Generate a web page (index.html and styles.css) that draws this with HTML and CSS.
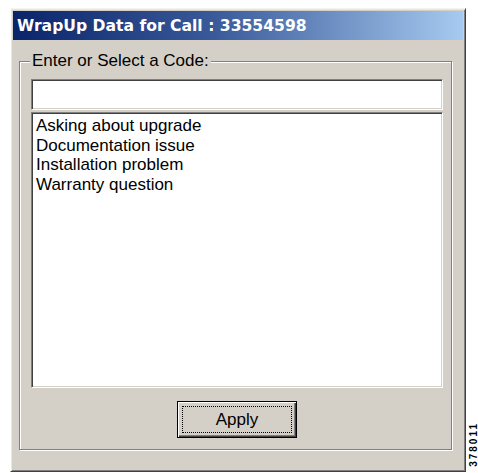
FILE: index.html
```html
<!DOCTYPE html>
<html lang="en">
<head>
<meta charset="utf-8">
<title>WrapUp Data</title>
<link rel="stylesheet" href="styles.css">
</head>
<body>
  <div class="window">
    <div class="titlebar">
      <span class="title">WrapUp Data for Call : 33554598</span>
    </div>
    <fieldset class="group">
      <legend class="group-label">Enter or Select a Code:</legend>
      <input class="code-input" type="text" aria-label="Wrap-up code">
      <ul class="code-list">
        <li>Asking about upgrade</li>
        <li>Documentation issue</li>
        <li>Installation problem</li>
        <li>Warranty question</li>
      </ul>
      <div class="actions">
        <button class="apply" type="button"><span class="focus-ring">Apply</span></button>
      </div>
    </fieldset>
  </div>
  <div class="fig-id">378011</div>
</body>
</html>
```

FILE: styles.css
```css
html, body {
  margin: 0;
  padding: 0;
  background: #ffffff;
}

body {
  position: relative;
  width: 478px;
  height: 473px;
  overflow: hidden;
  font-family: "Liberation Sans", Arial, sans-serif;
}

/* Classic raised dialog frame */
.window {
  box-sizing: border-box;
  margin: 8px 0 0 10px;
  width: 456px;
  height: 464px;
  padding: 2px;
  background: #d4d0c8;
  border: 1px solid;
  border-color: #f4f3f0 #404040 #404040 #ffffff;
  box-shadow: inset 1px 1px 0 #e9e7e2, inset -1px -1px 0 #808080;
  display: flex;
  flex-direction: column;
}

.titlebar {
  height: 29px;
  display: flex;
  align-items: center;
  padding-left: 4px;
  background: linear-gradient(to right, #0a246a 0%, #3a5a9a 45%, #a6caf0 100%);
}

.title {
  color: #ffffff;
  font-family: "DejaVu Sans", Verdana, sans-serif;
  font-weight: bold;
  font-size: 15.6px;
  white-space: nowrap;
}

/* Etched group box */
.group {
  box-sizing: border-box;
  margin: 12px 0 0 6px;
  width: 433px;
  padding: 9px 8px 11px 11px;
  border: 1px solid #808080;
  box-shadow: inset 1px 1px 0 #ffffff, 1px 1px 0 #ffffff;
  display: flex;
  flex-direction: column;
  min-width: 0;
}

.group-label {
  padding: 0 2px;
  margin-left: -1px;
  background: #d4d0c8;
  color: #000000;
  font-size: 17px;
  line-height: 18px;
}

/* Sunken field edges */
.code-input,
.code-list {
  box-sizing: border-box;
  width: 412px;
  background: #ffffff;
  border: 1px solid;
  border-color: #808080 #ffffff #ffffff #808080;
  box-shadow: inset 1px 1px 0 #404040, inset -1px -1px 0 #d4d0c8;
}

.code-input {
  display: block;
  height: 31px;
  margin: 0;
  padding: 0 4px;
  font: 17px "Liberation Sans", Arial, sans-serif;
  outline: none;
}

.code-list {
  list-style: none;
  margin: 2px 0 0 0;
  padding: 3px 4px;
  height: 276px;
  font-size: 17px;
  line-height: 19.5px;
  color: #000000;
}

.actions {
  display: flex;
  justify-content: center;
  margin-top: 13px;
}

/* Default push button: black frame around a raised bevel */
.apply {
  box-sizing: border-box;
  width: 120px;
  height: 37px;
  margin: 0;
  padding: 4px;
  background: #d4d0c8;
  border: 1px solid #000000;
  box-shadow: inset 1px 1px 0 #ffffff, inset -1px -1px 0 #404040, inset -2px -2px 0 #808080;
  font: 17px "Liberation Sans", Arial, sans-serif;
  color: #000000;
  display: flex;
}

.focus-ring {
  flex: 1;
  display: flex;
  align-items: center;
  justify-content: center;
  border: 1px dotted #000000;
}

/* Figure number printed sideways in the margin */
.fig-id {
  position: absolute;
  left: 469px;
  top: 422px;
  writing-mode: vertical-rl;
  transform: rotate(180deg);
  font-family: "Liberation Sans", Arial, sans-serif;
  font-weight: bold;
  font-size: 10px;
  line-height: 9px;
  letter-spacing: 2px;
  color: #000000;
}
```
